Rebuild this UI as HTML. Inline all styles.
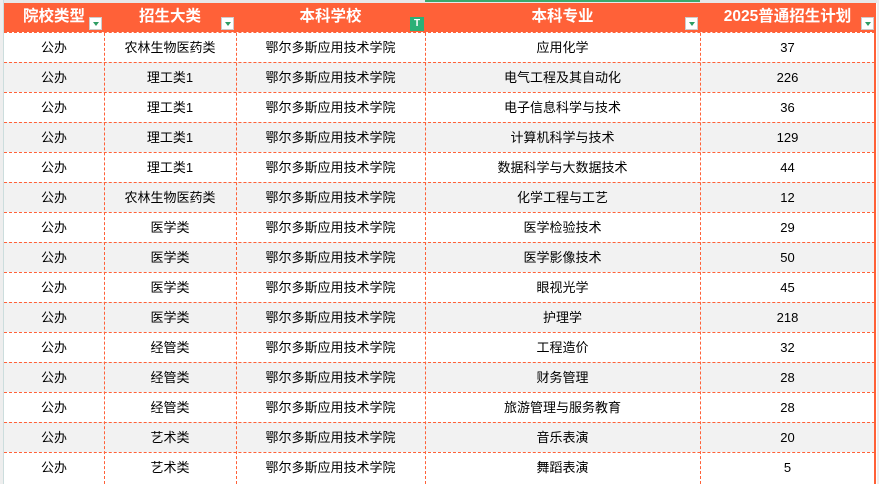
<!DOCTYPE html><html><head><meta charset="utf-8"><style>
body{margin:0;width:879px;height:484px;overflow:hidden;background:#fff;font-family:"Liberation Sans","Noto Sans CJK SC",sans-serif;position:relative}
.a{position:absolute}
.hd{position:absolute;top:3px;height:29px;background:#FF6138;color:#fff;font-weight:bold;font-size:15.5px;line-height:28px;text-align:center}
.row{position:absolute;left:4px;width:871px;height:30px;border-top:1px dashed #FF6138;box-sizing:border-box}
.c{position:absolute;top:0;height:30px;line-height:29px;text-align:center;font-size:13px;color:#000}
.vl{position:absolute;top:3px;height:481px;border-left:1px dashed #FF6138}
.dd{position:absolute;top:17px;width:13px;height:13px;background:#fff;border:1px solid #ccc;box-sizing:border-box}
.dd:after{content:"";position:absolute;left:3px;top:4px;border-left:3px solid transparent;border-right:3px solid transparent;border-top:4px solid #2e9d63}
</style></head><body>
<div class="a" style="left:0;top:0;width:879px;height:3px;background:#e8e8e8"></div>
<div class="a" style="left:425px;top:0;width:275px;height:2px;background:#3aa86b"></div>
<div class="a" style="left:0;top:0;width:3px;height:484px;background:#eee;border-right:1px solid #cdd"></div>
<div class="a" style="left:877px;top:0;width:2px;height:484px;background:#eee"></div>
<div class="hd" style="left:4px;width:100px">院校类型</div>
<div class="hd" style="left:104px;width:132px">招生大类</div>
<div class="hd" style="left:236px;width:189px">本科学校</div>
<div class="hd" style="left:425px;width:275px">本科专业</div>
<div class="hd" style="left:700px;width:175px">2025普通招生计划</div>
<div class="dd" style="left:89px"></div>
<div class="dd" style="left:221px"></div>
<div class="a" style="left:410px;top:17px;width:14px;height:14px;background:#2bb077;color:#fff;font-size:10px;font-weight:bold;line-height:14px;text-align:center">T</div>
<div class="dd" style="left:685px"></div>
<div class="dd" style="left:861px"></div>
<div id="rows"></div>
<div class="vl" style="left:104px"></div><div class="vl" style="left:236px"></div><div class="vl" style="left:425px"></div><div class="vl" style="left:700px"></div>
<div class="a" style="left:874px;top:3px;width:2px;height:481px;background:#FF6138"></div>
<script>
var d=[["农林生物医药类","应用化学","37"],["理工类1","电气工程及其自动化","226"],["理工类1","电子信息科学与技术","36"],["理工类1","计算机科学与技术","129"],["理工类1","数据科学与大数据技术","44"],["农林生物医药类","化学工程与工艺","12"],["医学类","医学检验技术","29"],["医学类","医学影像技术","50"],["医学类","眼视光学","45"],["医学类","护理学","218"],["经管类","工程造价","32"],["经管类","财务管理","28"],["经管类","旅游管理与服务教育","28"],["艺术类","音乐表演","20"],["艺术类","舞蹈表演","5"]];
var h="";d.forEach(function(r,i){h+='<div class="row" style="top:'+(32+i*30)+'px;background:'+(i%2?'#f2f2f2':'#fff')+'"><div class="c" style="left:0;width:100px">公办</div><div class="c" style="left:100px;width:132px">'+r[0]+'</div><div class="c" style="left:232px;width:189px">鄂尔多斯应用技术学院</div><div class="c" style="left:421px;width:275px">'+r[1]+'</div><div class="c" style="left:696px;width:175px">'+r[2]+'</div></div>'});
document.getElementById("rows").innerHTML=h;
</script>
</body></html>
